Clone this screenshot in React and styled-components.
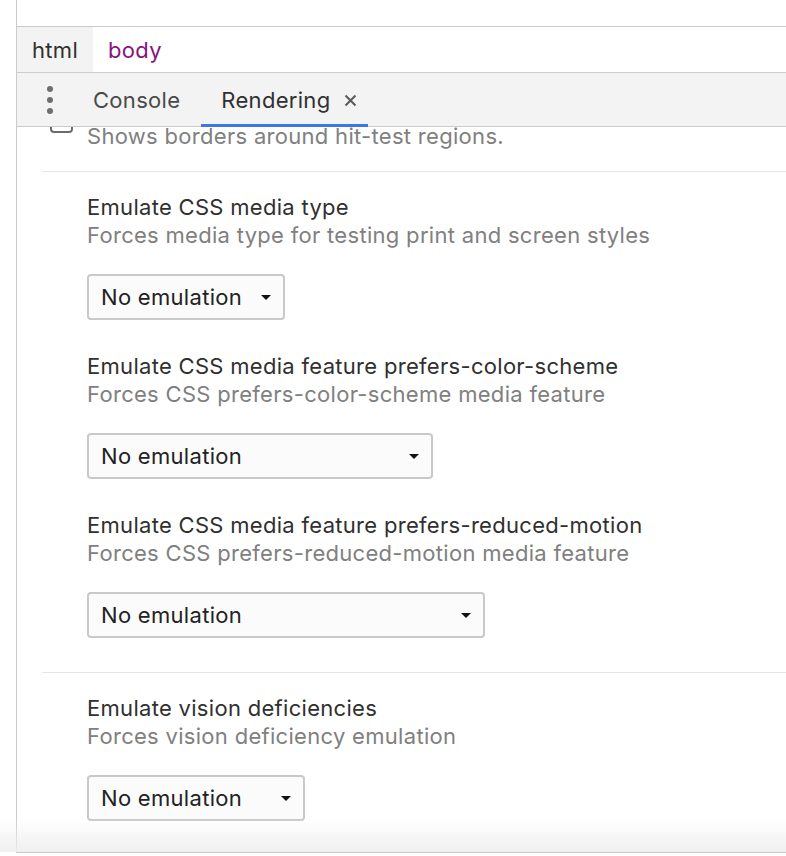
import React from "react";
import styled, { createGlobalStyle } from "styled-components";

const Global = createGlobalStyle`
  html, body { margin: 0; padding: 0; background: #ffffff; }
  body {
    font-family: Inter, "Liberation Sans", Arial, sans-serif;
    letter-spacing: 0.3px;
  }
  * { box-sizing: border-box; }
`;

const Page = styled.div`
  position: relative;
  height: 856px;
  width: 786px;
  overflow: hidden;
  background: #fff;
  padding-left: 16px;
  display: flex;
`;

const Panel = styled.div`
  flex: 1;
  display: flex;
  flex-direction: column;
  height: 853px;
  border-left: 1px solid #cbcbcb;
  border-bottom: 1px solid #cbcbcb;
  min-width: 0;
`;

const TopSpace = styled.div`
  height: 27px;
  flex: none;
  border-bottom: 1px solid #cbcbcb;
`;

const Crumbs = styled.div`
  height: 46px;
  flex: none;
  display: flex;
  border-bottom: 1px solid #cbcbcb;
  font-size: 22px;
`;

const Crumb = styled.div`
  display: flex;
  align-items: center;
  padding: 0 15px;
  background: ${(p) => (p.$active ? "#f3f3f3" : "transparent")};
  color: ${(p) => (p.$tag ? "#881280" : "#303030")};
`;

const TabBar = styled.div`
  height: 54px;
  flex: none;
  display: flex;
  align-items: stretch;
  background: #f3f3f3;
  border-bottom: 1px solid #cbcbcb;
  font-size: 22px;
`;

const MenuButton = styled.div`
  width: 56px;
  display: flex;
  flex-direction: column;
  align-items: flex-end;
  justify-content: center;
  gap: 5px;
  padding-right: 20px;
`;

const Dot = styled.span`
  width: 6px;
  height: 6px;
  border-radius: 50%;
  background: #6e6e6e;
`;

const Tab = styled.div`
  display: flex;
  align-items: center;
  gap: 14px;
  padding: ${(p) => (p.$selected ? "0 11px 0 20px" : "0 21px 0 20px")};
  color: ${(p) => (p.$selected ? "#303030" : "#4a4a4a")};
  margin-bottom: -1px;
  border-bottom: 3px solid ${(p) => (p.$selected ? "#3b78e7" : "transparent")};
  padding-top: 3px;
`;

const CloseIcon = styled.svg`
  width: 13px;
  height: 13px;
  display: block;
`;

const Content = styled.div`
  flex: 1;
  overflow: hidden;
  min-height: 0;
`;

const Group = styled.div`
  margin-left: 25px;
  padding: 21px 0 ${(p) => (p.$last ? "0" : "34px")} 45px;
  border-top: 1px solid #e6e6e6;
  display: flex;
  flex-direction: column;
  gap: 32px;
`;

const ClippedGroup = styled.div`
  margin-left: 25px;
  margin-top: -33px;
  padding: 0 0 21px 8px;
  display: flex;
  gap: 14px;
`;

const Checkbox = styled.span`
  flex: none;
  width: 23px;
  height: 22px;
  margin-top: 17px;
  border: 2px solid #6b6b6b;
  border-radius: 4px;
  background: #fff;
`;

const Section = styled.div`
  display: flex;
  flex-direction: column;
`;

const Title = styled.div`
  font-size: 22px;
  line-height: 28px;
  color: #303030;
  white-space: nowrap;
`;

const Desc = styled.div`
  font-size: 22px;
  line-height: 28px;
  color: #808080;
  white-space: nowrap;
`;

const Select = styled.div`
  margin-top: 25px;
  width: ${(p) => p.$width}px;
  height: 46px;
  display: flex;
  align-items: center;
  justify-content: space-between;
  padding: 0 12px 0 12px;
  border: 2px solid #c9c9c9;
  border-radius: 4px;
  background: #fbfbfb;
  font-size: 22px;
  color: #222;
`;

const Arrow = styled.span`
  width: 0;
  height: 0;
  border-left: 5px solid transparent;
  border-right: 5px solid transparent;
  border-top: 5px solid #111;
`;

const BottomShade = styled.div`
  position: absolute;
  left: 0;
  right: 0;
  bottom: 4px;
  height: 34px;
  background: linear-gradient(to bottom, rgba(240, 240, 240, 0), rgba(238, 238, 238, 0.9));
  pointer-events: none;
`;

function Dropdown({ width }) {
  return (
    <Select $width={width}>
      <span>No emulation</span>
      <Arrow />
    </Select>
  );
}

function Setting({ title, desc, width }) {
  return (
    <Section>
      <Title>{title}</Title>
      <Desc>{desc}</Desc>
      <Dropdown width={width} />
    </Section>
  );
}

export default function App() {
  return (
    <>
      <Global />
      <Page>
        <Panel>
          <TopSpace />
          <Crumbs>
            <Crumb $active>html</Crumb>
            <Crumb $tag>body</Crumb>
          </Crumbs>
          <TabBar>
            <MenuButton>
              <Dot />
              <Dot />
              <Dot />
            </MenuButton>
            <Tab>Console</Tab>
            <Tab $selected>
              Rendering
              <CloseIcon viewBox="0 0 13 13">
                <path d="M1.5 1.5 L11.5 11.5 M11.5 1.5 L1.5 11.5" stroke="#5a5a5a" strokeWidth="2" />
              </CloseIcon>
            </Tab>
          </TabBar>
          <Content>
            <ClippedGroup>
              <Checkbox />
              <Section>
                <Title>Hit-test borders</Title>
                <Desc>Shows borders around hit-test regions.</Desc>
              </Section>
            </ClippedGroup>
            <Group>
              <Setting
                title="Emulate CSS media type"
                desc="Forces media type for testing print and screen styles"
                width={198}
              />
              <Setting
                title="Emulate CSS media feature prefers-color-scheme"
                desc="Forces CSS prefers-color-scheme media feature"
                width={346}
              />
              <Setting
                title="Emulate CSS media feature prefers-reduced-motion"
                desc="Forces CSS prefers-reduced-motion media feature"
                width={398}
              />
            </Group>
            <Group $last>
              <Setting
                title="Emulate vision deficiencies"
                desc="Forces vision deficiency emulation"
                width={218}
              />
            </Group>
          </Content>
        </Panel>
        <BottomShade />
      </Page>
    </>
  );
}
